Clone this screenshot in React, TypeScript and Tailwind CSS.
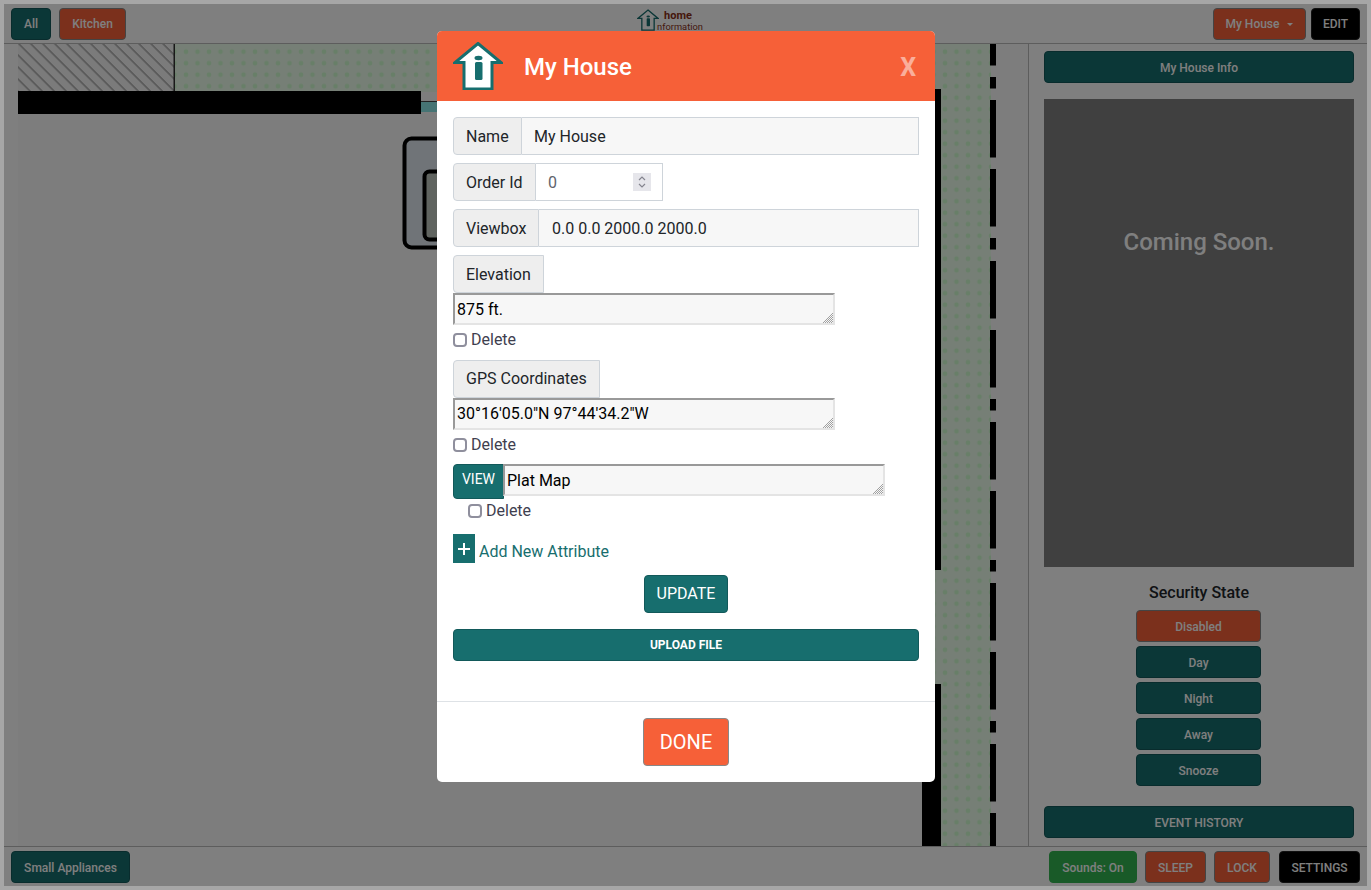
import type { ReactNode } from 'react'

const TEAL = 'border-[#12595a] bg-[#176e6e] text-white'
const ORANGE = 'border-[#888] bg-[#f66038] text-white'
const BLACK = 'border-[#222] bg-black text-white'
const GREEN = 'border-[#32b450] bg-[#32b450] text-white'

function Btn({ className, children }: { className: string; children: ReactNode }) {
  return (
    <button
      className={`flex h-8 items-center justify-center rounded border pt-px text-xs leading-[18px] font-medium ${className}`}
    >
      {children}
    </button>
  )
}

function HouseLogo({ className, outline }: { className: string; outline: string }) {
  return (
    <svg viewBox="0 0 50 48" className={className}>
      <path d="M25 1.5 48 20.5H39V47H11V20.5H2Z" fill="#fff" stroke={outline} strokeWidth="3" strokeLinejoin="miter" />
      <ellipse cx="25.5" cy="16" rx="4" ry="2.2" fill={outline} />
      <rect x="22" y="20" width="7.5" height="18" rx="1.5" fill={outline} />
    </svg>
  )
}

function FloorPlan() {
  return (
    <svg className="h-full w-full" viewBox="4 44 1024 802">
      <defs>
        <pattern id="dots" x="180.25" y="46" width="11.5" height="11.5" patternUnits="userSpaceOnUse">
          <circle cx="5.75" cy="5.75" r="2.3" fill="#d0ffd0" />
        </pattern>
        <pattern id="hatch" width="8.5" height="8.5" patternUnits="userSpaceOnUse" patternTransform="rotate(45 18 44)">
          <rect width="8.5" height="8.5" fill="#f6f6f6" />
          <rect width="8.5" height="1.5" fill="#a8a8a8" />
        </pattern>
      </defs>
      <rect x="4" y="44" width="14" height="802" fill="#fff" />
      <rect x="18" y="44" width="1010" height="802" fill="#fafafa" />
      <rect x="18" y="44" width="156" height="48" fill="url(#hatch)" />
      <rect x="175" y="44" width="816" height="48" fill="#ecfeec" />
      <rect x="175" y="44" width="816" height="48" fill="url(#dots)" />
      <rect x="935" y="44" width="56" height="802" fill="#ecfeec" />
      <rect x="935" y="44" width="56" height="802" fill="url(#dots)" />
      <rect x="173.5" y="44" width="1.5" height="48" fill="#333" />
      <rect x="18" y="91" width="403" height="23" fill="#000" />
      <rect x="421" y="102" width="20" height="10" fill="#8ce8e8" />
      <rect x="421" y="101" width="20" height="1" fill="#444" />
      <rect x="404.5" y="138.5" width="60" height="109" rx="7" fill="#e0e8f0" stroke="#000" strokeWidth="4" />
      <rect x="424.5" y="171.5" width="40" height="68" rx="5" fill="#c0c8c0" stroke="#000" strokeWidth="4" />
      <rect x="935" y="89" width="6" height="481" fill="#000" />
      <rect x="922" y="684" width="19" height="162" fill="#000" />
      <line x1="993" y1="-84" x2="993" y2="846" stroke="#000" strokeWidth="6" strokeDasharray="11.5 11.5 57.5 11.5 57.5 11.5" />
    </svg>
  )
}

function GroupLabel({ children, className }: { children: ReactNode; className: string }) {
  return (
    <span className={`flex h-[38px] items-center rounded-l border border-[#ced4da] bg-[#eeeeee] px-3 text-[#212529] ${className}`}>
      {children}
    </span>
  )
}

function TextRow({ label, value, labelWidth, valuePad }: { label: string; value: string; labelWidth: string; valuePad: string }) {
  return (
    <div className="flex h-[38px]">
      <GroupLabel className={`pt-px ${labelWidth}`}>{label}</GroupLabel>
      <div className={`flex flex-1 items-center border border-l-0 border-[#ced4da] bg-[#f7f7f7] pt-px text-[#212529] ${valuePad}`}>
        {value}
      </div>
    </div>
  )
}

function AttrArea({ value, className, pad }: { value: string; className: string; pad: string }) {
  return (
    <div className={`relative h-8 ${className}`}>
      <textarea
        readOnly
        defaultValue={value}
        className={`block h-8 w-full resize-none border-2 border-t-[#999] border-r-[#e4e4e4] border-b-[#e4e4e4] border-l-[#999] bg-[#f7f7f7] px-0.5 text-black ${pad}`}
      />
      <svg viewBox="0 0 11 11" className="absolute right-[2px] bottom-[2px] h-[11px] w-[11px]">
        <path d="M11 1 1 11M11 3 3 11M11 5 5 11M11 7 7 11M11 9 9 11" stroke="#8a8a8a" strokeWidth="0.8" />
      </svg>
    </div>
  )
}

function DeleteCheck({ className }: { className: string }) {
  return (
    <label className={`flex h-6 items-center gap-[4px] text-[#3f3f4f] ${className}`}>
      <span className="block h-[14px] w-[14px] rounded-sm border-2 border-[#8f8f9d] bg-white" />
      Delete
    </label>
  )
}

export default function App() {
  return (
    <div className="relative flex h-[890px] w-full flex-col bg-[#a6a6a6] p-1 font-['Roboto',sans-serif] text-base">
      <div className="flex h-10 items-center justify-between border-b border-[#bbb] bg-white pr-[7px] pl-[7px]">
        <div className="flex gap-2">
          <Btn className={`w-10 ${TEAL}`}>All</Btn>
          <Btn className={`w-[67px] ${ORANGE}`}>Kitchen</Btn>
        </div>
        <div className="mt-[5px] flex items-start self-start pl-[1px]">
          <HouseLogo className="h-[22px] w-[22px]" outline="#176e6e" />
          <div className="-ml-0.5 flex flex-col pt-px text-[#8a3018]">
            <span className="ml-[7px] text-[11px] leading-[11px] font-bold">home</span>
            <span className="text-[9.3px] leading-[11px]">nformation</span>
          </div>
        </div>
        <div className="flex gap-[5px]">
          <Btn className={`w-[93px] gap-2 ${ORANGE}`}>
            My House
            <span className="h-0 w-0 border-x-[3.5px] border-t-[3.5px] border-x-transparent border-t-white" />
          </Btn>
          <Btn className={`w-[49px] ${BLACK}`}>EDIT</Btn>
        </div>
      </div>

      <div className="flex h-[802px]">
        <div className="w-[1024px] shrink-0">
          <FloorPlan />
        </div>
        <div className="flex flex-1 flex-col border-l border-[#bbb] bg-white pt-[7px] pr-[13px] pl-[15px]">
          <Btn className={`w-[310px] ${TEAL}`}>My House Info</Btn>
          <div className="mt-4 flex h-[468px] w-[310px] justify-center bg-[#808080] pt-[127px] text-2xl leading-8 font-medium text-white">
            Coming Soon.
          </div>
          <div className="mt-[14px] w-[310px] text-center font-medium text-[#212529]">Security State</div>
          <div className="mt-[5px] flex w-[310px] flex-col items-start gap-1 pl-[92px]">
            <Btn className={`w-[125px] ${ORANGE}`}>Disabled</Btn>
            <Btn className={`w-[125px] ${TEAL}`}>Day</Btn>
            <Btn className={`w-[125px] ${TEAL}`}>Night</Btn>
            <Btn className={`w-[125px] ${TEAL}`}>Away</Btn>
            <Btn className={`w-[125px] ${TEAL}`}>Snooze</Btn>
          </div>
          <Btn className={`mt-5 w-[310px] ${TEAL}`}>EVENT HISTORY</Btn>
        </div>
      </div>

      <div className="flex h-10 items-start justify-between border-t border-[#bbb] bg-white px-[7px] pt-1">
        <Btn className={`w-[119px] ${TEAL}`}>Small Appliances</Btn>
        <div className="flex gap-2">
          <Btn className={`w-[88px] ${GREEN}`}>Sounds: On</Btn>
          <Btn className={`w-[61px] ${ORANGE}`}>SLEEP</Btn>
          <Btn className={`mr-px w-[56px] ${ORANGE}`}>LOCK</Btn>
          <Btn className={`w-[81px] ${BLACK}`}>SETTINGS</Btn>
        </div>
      </div>

      <div className="absolute inset-1 bg-black/50" />

      <div className="absolute top-[31px] left-[437px] w-[498px] overflow-hidden rounded-[5px] bg-white">
        <div className="flex h-[70px] items-center bg-[#f66038] pr-[19px] pl-4">
          <HouseLogo className="h-12 w-[50px]" outline="#176e6e" />
          <span className="ml-[21px] flex-1 pt-0.5 text-2xl leading-8 font-medium text-white">My House</span>
          <span className="pt-1 text-[25px] leading-8 font-bold text-white/50">X</span>
        </div>

        <div className="flex h-[600px] flex-col px-4 pt-4">
          <TextRow label="Name" value="My House" labelWidth="w-[69px]" valuePad="px-3" />
          <div className="mt-2 flex h-[38px] w-[210px]">
            <GroupLabel className="w-[83px] pt-px">Order Id</GroupLabel>
            <div className="relative w-[127px]">
              <input
                readOnly
                type="text"
                defaultValue="0"
                className="h-[38px] w-full border border-l-0 border-[#ced4da] bg-white px-3 pt-px text-[#60646c]"
              />
              <span className="absolute top-[10px] right-[12px] flex h-[18px] w-[18px] items-center justify-center bg-[#e6e6eb]">
                <svg viewBox="0 0 18 18" className="h-[18px] w-[18px]">
                  <path d="M6 7 9 4l3 3M6 11l3 3 3-3" fill="none" stroke="#85858f" strokeWidth="1.2" />
                </svg>
              </span>
            </div>
          </div>
          <div className="mt-2">
            <TextRow label="Viewbox" value="0.0 0.0 2000.0 2000.0" labelWidth="w-[86px]" valuePad="px-[13px]" />
          </div>

          <GroupLabel className="mt-2 w-[91px] pt-px">Elevation</GroupLabel>
          <AttrArea value="875 ft." className="w-[382px]" pad="pt-[3px]" />
          <DeleteCheck className="mt-[3px]" />

          <GroupLabel className="mt-2 w-[147px]">GPS Coordinates</GroupLabel>
          <AttrArea value={'30°16\'05.0"N 97°44\'34.2"W'} className="w-[382px]" pad="pt-[2px]" />
          <DeleteCheck className="mt-[3px]" />

          <div className="mt-[7px] flex items-start">
            <button className="flex h-[35px] w-[51px] justify-center rounded-l border border-[#12595a] bg-[#176e6e] pt-1 text-sm leading-5 text-white">
              VIEW
            </button>
            <AttrArea value="Plat Map" className="-ml-px w-[382px]" pad="pt-[3px]" />
          </div>
          <DeleteCheck className="ml-[15px]" />

          <div className="mt-[11px] flex items-end gap-1">
            <span className="flex h-[29px] w-[22px] items-center justify-center bg-[#176e6e]">
              <svg viewBox="0 0 12 12" className="h-3 w-3">
                <path d="M6 0v12M0 6h12" stroke="#fff" strokeWidth="2" />
              </svg>
            </span>
            <span className="leading-[22px] text-[#176e6e]">Add New Attribute</span>
          </div>

          <button className="mx-auto mt-3 flex h-[38px] w-[84px] items-center justify-center rounded border border-[#12595a] bg-[#176e6e] text-white">
            UPDATE
          </button>
          <button className="mt-4 flex h-8 items-center justify-center rounded border border-[#12595a] bg-[#176e6e] text-xs font-bold text-white">
            UPLOAD FILE
          </button>
        </div>

        <div className="flex h-[81px] justify-center border-t border-[#dee2e6] pt-4">
          <button className="flex h-12 w-[86px] items-center justify-center rounded border border-[#888] bg-[#f66038] text-xl text-white">
            DONE
          </button>
        </div>
      </div>
    </div>
  )
}
